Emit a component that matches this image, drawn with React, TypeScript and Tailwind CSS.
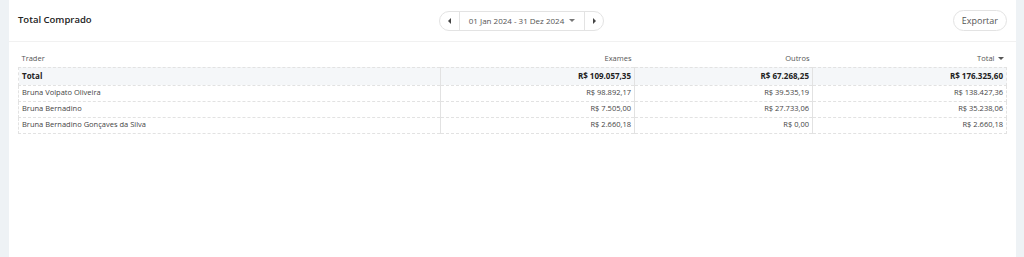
const ROWS = [
  ['Bruna Volpato Oliveira', 'R$ 98.892,17', 'R$ 39.535,19', 'R$ 138.427,36'],
  ['Bruna Bernadino', 'R$ 7.505,00', 'R$ 27.733,06', 'R$ 35.238,06'],
  ['Bruna Bernadino Gonçaves da Silva', 'R$ 2.660,18', 'R$ 0,00', 'R$ 2.660,18'],
] as const;

function Caret({ dir }: { dir: 'left' | 'right' | 'down' }) {
  if (dir === 'down') {
    return (
      <svg width="6" height="3" viewBox="0 0 6 3" className="fill-current">
        <path d="M0 0h6L3 3z" />
      </svg>
    );
  }
  return (
    <svg width="3" height="6" viewBox="0 0 3 6" className="fill-current">
      {dir === 'left' ? <path d="M3 0v6L0 3z" /> : <path d="M0 0v6l3-3z" />}
    </svg>
  );
}

export default function App() {
  return (
    <div
      className="flex h-[257px] w-[1024px] bg-[#eef2f5] pl-[9px] pr-[8px] text-[#333]"
      style={{ fontFamily: '"Open Sans", "Liberation Sans", sans-serif' }}
    >
      <section className="flex-1 bg-white">
        <header className="grid h-[42px] grid-cols-[1fr_auto_1fr] items-center border-b border-[#f1f1f1] px-[9px]">
          <h2 className="text-[9.5px] font-semibold text-[#222]">Total Comprado</h2>
          <div className="ml-[18px] flex h-[20px] items-center rounded-full border border-[#e3e3e3] text-[8px] text-[#555]">
            <button type="button" className="flex h-full w-[20px] items-center justify-center border-r border-[#e3e3e3] text-[#444]">
              <Caret dir="left" />
            </button>
            <button type="button" className="flex h-full w-[124px] items-center justify-center gap-[5px] whitespace-nowrap">
              01 Jan 2024 - 31 Dez 2024
              <span className="text-[#777]">
                <Caret dir="down" />
              </span>
            </button>
            <button type="button" className="flex h-full w-[19px] items-center justify-center border-l border-[#e3e3e3] text-[#444]">
              <Caret dir="right" />
            </button>
          </div>
          <div className="flex justify-end">
            <button type="button" className="h-[21px] rounded-full border border-[#e3e3e3] px-[8px] text-[9px] text-[#555]">
              Exportar
            </button>
          </div>
        </header>

        <div className="px-[9px] pt-[9px]">
          <table className="w-full border-collapse text-[7.5px] leading-none text-[#444]">
            <colgroup>
              <col className="w-[422px]" />
              <col className="w-[194px]" />
              <col className="w-[178px]" />
              <col />
            </colgroup>
            <thead>
              <tr className="h-[16px] text-[#555]">
                <th className="px-[3px] text-left font-normal">Trader</th>
                <th className="px-[3px] text-right font-normal">Exames</th>
                <th className="px-[3px] text-right font-normal">Outros</th>
                <th className="px-[3px] text-right font-normal">
                  <span className="inline-flex items-center gap-[3px]">
                    Total
                    <Caret dir="down" />
                  </span>
                </th>
              </tr>
            </thead>
            <tbody>
              <tr className="h-[18px] border border-dashed border-[#e2e2e2] bg-[#f5f7f9] text-[8px] font-bold text-[#222]">
                <td className="px-[3px]">Total</td>
                <td className="border-l border-solid border-[#e2e2e2] px-[3px] text-right">R$ 109.057,35</td>
                <td className="border-l border-solid border-[#e2e2e2] px-[3px] text-right">R$ 67.268,25</td>
                <td className="border-l border-solid border-[#e2e2e2] px-[3px] text-right">R$ 176.325,60</td>
              </tr>
              {ROWS.map(([name, exames, outros, total]) => (
                <tr key={name} className="h-[16px] border border-dashed border-[#e2e2e2]">
                  <td className="px-[3px]">{name}</td>
                  <td className="border-l border-solid border-[#e2e2e2] px-[3px] text-right">{exames}</td>
                  <td className="border-l border-solid border-[#e2e2e2] px-[3px] text-right">{outros}</td>
                  <td className="border-l border-solid border-[#e2e2e2] px-[3px] text-right">{total}</td>
                </tr>
              ))}
            </tbody>
          </table>
        </div>
      </section>
    </div>
  );
}
